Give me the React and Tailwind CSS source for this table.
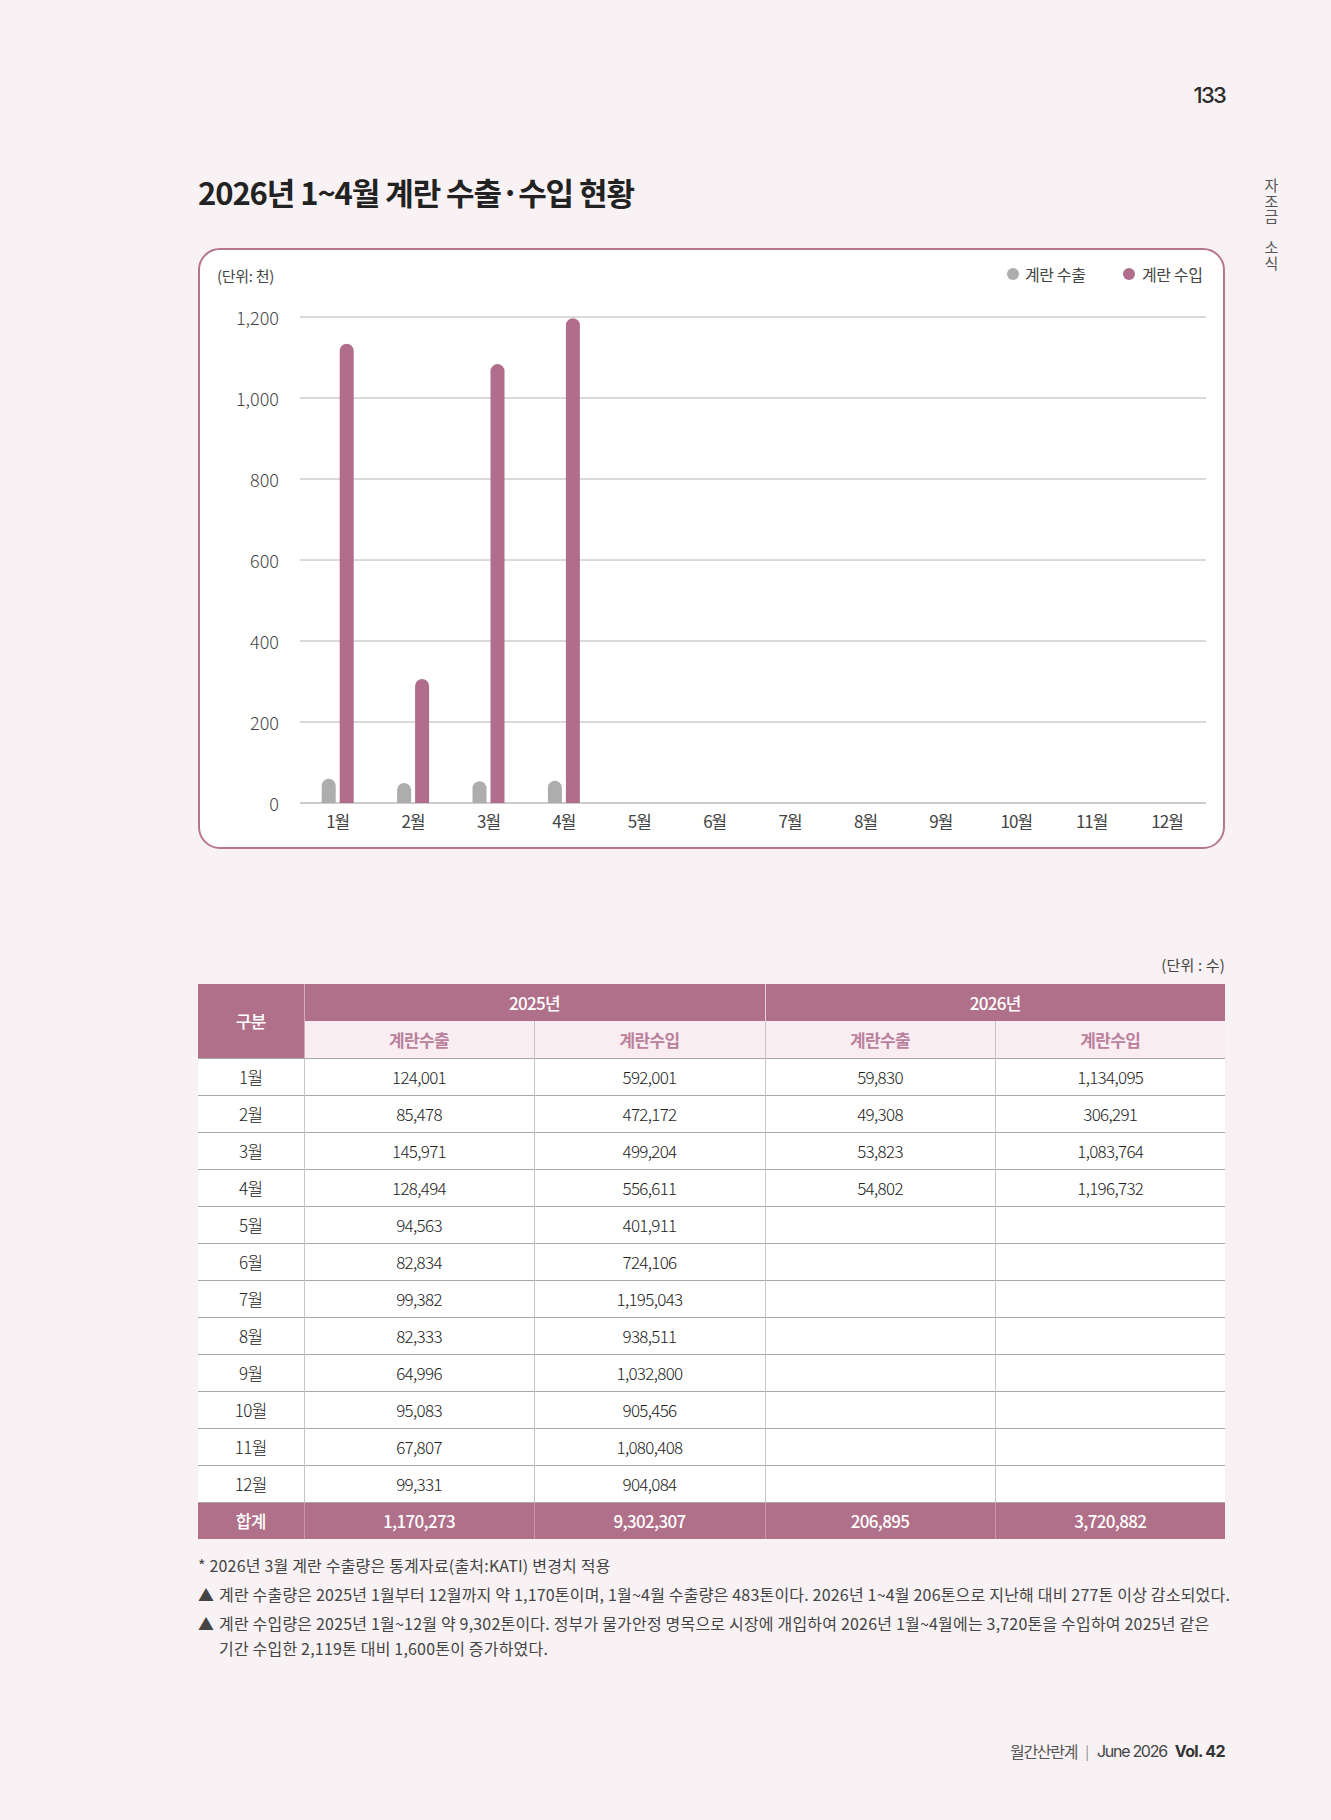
import React from "react";

const FONT = { fontFamily: '"Noto Sans CJK KR", "Noto Sans", sans-serif' };

const exportData = [59.83, 49.308, 53.823, 54.802];
const importData = [1134.095, 306.291, 1083.764, 1196.732];
const months = ["1월", "2월", "3월", "4월", "5월", "6월", "7월", "8월", "9월", "10월", "11월", "12월"];

const rows = [
  ["1월", "124,001", "592,001", "59,830", "1,134,095"],
  ["2월", "85,478", "472,172", "49,308", "306,291"],
  ["3월", "145,971", "499,204", "53,823", "1,083,764"],
  ["4월", "128,494", "556,611", "54,802", "1,196,732"],
  ["5월", "94,563", "401,911", "", ""],
  ["6월", "82,834", "724,106", "", ""],
  ["7월", "99,382", "1,195,043", "", ""],
  ["8월", "82,333", "938,511", "", ""],
  ["9월", "64,996", "1,032,800", "", ""],
  ["10월", "95,083", "905,456", "", ""],
  ["11월", "67,807", "1,080,408", "", ""],
  ["12월", "99,331", "904,084", "", ""],
];

// rounded-top bar
const bar = (x, w, value, base, scale) => {
  const h = value * scale;
  const r = w / 2;
  const top = base - h;
  return `M${x},${base} V${top + r} A${r},${r} 0 0 1 ${x + w},${top + r} V${base} Z`;
};

const Chart = () => {
  const base = 553;
  const step = 81; // px per 200
  const scale = step / 200;
  const colW = 75.4;
  return (
    <svg width="1023" height="597" style={FONT}>
      <text x="17" y="25" fontSize="15" fill="#444" dominantBaseline="central" letterSpacing="-0.3">
        (단위: 천)
      </text>

      {/* legend */}
      <circle cx="813" cy="24" r="6" fill="#adadad" />
      <text x="825" y="24" fontSize="16" fill="#444" dominantBaseline="central" letterSpacing="-0.4">
        계란 수출
      </text>
      <circle cx="929" cy="24" r="6" fill="#b06e8c" />
      <text x="942" y="24" fontSize="16" fill="#444" dominantBaseline="central" letterSpacing="-0.4">
        계란 수입
      </text>

      {/* grid */}
      {[0, 1, 2, 3, 4, 5, 6].map((i) => {
        const y = base - i * step;
        const label = i === 0 ? "0" : i * 200 >= 1000 ? `1,${String(i * 200 - 1000).padStart(3, "0")}` : String(i * 200);
        return (
          <g key={i}>
            <line x1="100" x2="1006" y1={y} y2={y} stroke={i === 0 ? "#9a9a9a" : "#b4b4b4"} strokeWidth="1" />
            <text x="79" y={y} fontSize="18" fill="#444" textAnchor="end" dominantBaseline="central" fontWeight="300">
              {label}
            </text>
          </g>
        );
      })}

      {/* bars */}
      {exportData.map((v, i) => {
        const cx = 137.7 + colW * i;
        return (
          <g key={i}>
            <path d={bar(cx - 16, 14, v, base, scale)} fill="#adadad" />
            <path d={bar(cx + 2, 14, importData[i], base, scale)} fill="#b06e8c" />
          </g>
        );
      })}

      {/* month labels */}
      {months.map((m, i) => (
        <text
          key={m}
          x={137.7 + colW * i}
          y="570"
          fontSize="17"
          fill="#444"
          textAnchor="middle"
          dominantBaseline="central"
          letterSpacing="-1"
        >
          {m}
        </text>
      ))}
    </svg>
  );
};

const App = () => {
  return (
    <div className="min-h-[1820px] bg-[#f8f2f4] flex pl-[198px] text-[#333]" style={FONT}>
      <div className="w-[1027px] pt-[84px]">
        {/* page number */}
        <div className="flex justify-end">
          <span className="text-[22px] leading-none font-medium tracking-[-0.08em] text-[#2b2b2b]" style={{ fontFamily: "Inter, sans-serif" }}>
            133
          </span>
        </div>

        {/* title */}
        <h1 className="mt-[70px] text-[31px] leading-none font-bold tracking-[-0.035em] text-[#222]">
          2026년 1~4월 계란 수출·수입 현황
        </h1>

        {/* chart */}
        <div className="mt-[41px] h-[601px] border-2 border-[#b7768f] rounded-[22px] bg-white overflow-hidden">
          <Chart />
        </div>

        {/* unit */}
        <div className="mt-[106px] flex justify-end text-[15px] leading-[20px] text-[#444] tracking-[0.01em]">
          (단위 : 수)
        </div>

        {/* table */}
        <table className="mt-[9px] w-[1027px] table-fixed border-collapse text-[17px] tracking-[-0.04em]">
          <colgroup>
            <col className="w-[106px]" />
            <col className="w-[230px]" />
            <col className="w-[231px]" />
            <col className="w-[230px]" />
            <col className="w-[230px]" />
          </colgroup>
          <thead>
            <tr className="h-[37px] bg-[#b07089] text-white font-medium">
              <th rowSpan={2} className="font-medium border-r border-[#d3a9bb]">구분</th>
              <th colSpan={2} className="font-medium border-r border-[#e6cfd9]">2025년</th>
              <th colSpan={2} className="font-medium">2026년</th>
            </tr>
            <tr className="h-[37px] bg-[#f9edf2] text-[#b9819b] border-b border-[#a8a8a8]">
              <th className="font-bold border-r border-[#c4c4c4]">계란수출</th>
              <th className="font-bold border-r border-[#c4c4c4]">계란수입</th>
              <th className="font-bold border-r border-[#c4c4c4]">계란수출</th>
              <th className="font-bold">계란수입</th>
            </tr>
          </thead>
          <tbody className="bg-white font-light text-[#222]">
            {rows.map((r) => (
              <tr key={r[0]} className="h-[37px] border-b border-[#a8a8a8]">
                {r.map((c, j) => (
                  <td key={j} className={`text-center ${j < 4 ? "border-r border-[#c4c4c4]" : ""}`}>
                    {c}
                  </td>
                ))}
              </tr>
            ))}
            <tr className="h-[37px] bg-[#b07089] text-white font-medium">
              <td className="text-center border-r border-[#c995ab]">합계</td>
              <td className="text-center border-r border-[#c995ab]">1,170,273</td>
              <td className="text-center border-r border-[#c995ab]">9,302,307</td>
              <td className="text-center border-r border-[#c995ab]">206,895</td>
              <td className="text-center">3,720,882</td>
            </tr>
          </tbody>
        </table>

        {/* notes */}
        <div className="mt-[14px] text-[16px] leading-[25px] text-[#444] tracking-[0.012em] whitespace-nowrap">
          <p>* 2026년 3월 계란 수출량은 통계자료(출처:KATI) 변경치 적용</p>
          <div className="mt-1 flex">
            <span className="w-[21px] shrink-0">▲</span>
            <p>계란 수출량은 2025년 1월부터 12월까지 약 1,170톤이며, 1월~4월 수출량은 483톤이다. 2026년 1~4월 206톤으로 지난해 대비 277톤 이상 감소되었다.</p>
          </div>
          <div className="mt-1 flex">
            <span className="w-[21px] shrink-0">▲</span>
            <div>
              <p>계란 수입량은 2025년 1월~12월 약 9,302톤이다. 정부가 물가안정 명목으로 시장에 개입하여 2026년 1월~4월에는 3,720톤을 수입하여 2025년 같은</p>
              <p>기간 수입한 2,119톤 대비 1,600톤이 증가하였다.</p>
            </div>
          </div>
        </div>

        {/* footer */}
        <div className="mt-[80px] flex justify-end items-center gap-[8px] text-[16px] leading-[20px]">
          <span className="text-[#555] tracking-[-0.08em]">월간산란계</span>
          <span className="text-[#888] text-[14px]">|</span>
          <span className="text-[#444] tracking-[-0.08em]" style={{ fontFamily: "Inter, sans-serif" }}>June 2026</span>
          <span className="font-bold text-[#333] tracking-[-0.04em]" style={{ fontFamily: "Inter, sans-serif" }}>Vol. 42</span>
        </div>
      </div>

      {/* side tab */}
      <div className="ml-[39px] w-[15px] pt-[178px]">
        <div className="[writing-mode:vertical-rl] text-[15px] leading-[15px] tracking-[0.5px] text-[#555]">
          자조금　소식
        </div>
      </div>
    </div>
  );
};

export default App;
